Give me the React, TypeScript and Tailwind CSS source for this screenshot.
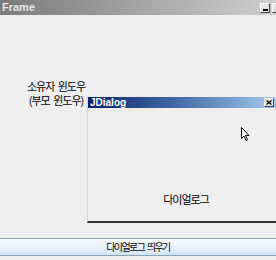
import React from "react";

export default function App() {
  return (
    <div
      className="relative w-[276px] h-[260px] overflow-hidden bg-[#eeeeee] flex flex-col"
      style={{ fontFamily: '"Noto Sans CJK KR", "Noto Sans", sans-serif' }}
    >
      {/* Frame title bar */}
      <div className="h-[15px] shrink-0 flex items-center justify-between bg-gradient-to-r from-[#7a7a7a] via-[#a4a4a4] to-[#cfcfcf]">
        <span
          className="pl-[2px] text-[11px] font-bold leading-none text-[#e6e6e6]"
          style={{ fontFamily: '"Liberation Sans", sans-serif' }}
        >
          Frame
        </span>
        <div className="flex gap-[2px] mr-[-6px]">
          <div className="w-[10px] h-[10px] bg-[#e4e4e4] border border-t-white border-l-white border-r-[#404040] border-b-[#404040] flex items-end justify-center pb-[1px]">
            <div className="w-[5px] h-[2px] bg-black" />
          </div>
          <div className="w-[10px] h-[10px] bg-[#e4e4e4] border border-t-white border-l-white border-r-[#404040] border-b-[#404040]" />
        </div>
      </div>

      {/* Content area */}
      <div className="flex-1 relative">
        <div className="pt-[66px] w-[112px] flex flex-col items-center gap-[3px] text-[11px] leading-none tracking-[-1px] [word-spacing:2px] text-black">
          <span className="leading-[11px]">소유자 윈도우</span>
          <span className="leading-[11px]">(부모 윈도우)</span>
        </div>

        {/* JDialog window */}
        <div className="absolute left-[87px] top-[82px] right-0 h-[126px] bg-[#eeeeee] border-l border-l-[#d8d8d8] border-b-2 border-b-[#303030] flex flex-col">
          <div className="h-[11px] flex items-center justify-between bg-gradient-to-r from-[#0a246a] via-[#4a6ea8] to-[#a6caf0]">
            <span
              className="pl-[2px] text-[10px] font-bold leading-none text-white"
              style={{ fontFamily: '"Liberation Sans", sans-serif' }}
            >
              JDialog
            </span>
            <div className="mr-[2px] w-[10px] h-[9px] bg-[#e4e4e4] border border-t-white border-l-white border-r-[#404040] border-b-[#404040] flex items-center justify-center">
              <svg width="6" height="5" viewBox="0 0 6 5">
                <path d="M0.5 0.5 L5.5 4.5 M5.5 0.5 L0.5 4.5" stroke="black" strokeWidth="1.3" />
              </svg>
            </div>
          </div>
          <div className="flex-1 relative flex items-end justify-center pb-[16px] pl-[8px]">
            <span className="text-[11px] leading-none tracking-[-1px] text-black">다이얼로그</span>
            <svg
              className="absolute left-[153px] top-[19px]"
              width="10"
              height="16"
              viewBox="0 0 10 16"
            >
              <path
                d="M0.5 0.5 L0.5 11.5 L3 9 L5 13.5 L6.5 12.8 L4.6 8.4 L8 8.4 Z"
                fill="white"
                stroke="black"
                strokeWidth="1"
                strokeLinejoin="miter"
              />
            </svg>
          </div>
        </div>
      </div>

      {/* Bottom button */}
      <div className="h-[18px] shrink-0 mb-[4px] border-y border-[#8aa2bc] bg-gradient-to-b from-[#f6f9fd] via-[#eaf2fb] to-[#d4e2f1] flex items-center justify-center">
        <span className="text-[10px] leading-none tracking-[-1.6px] [word-spacing:2px] text-black">다이얼로그 띄우기</span>
      </div>
    </div>
  );
}
